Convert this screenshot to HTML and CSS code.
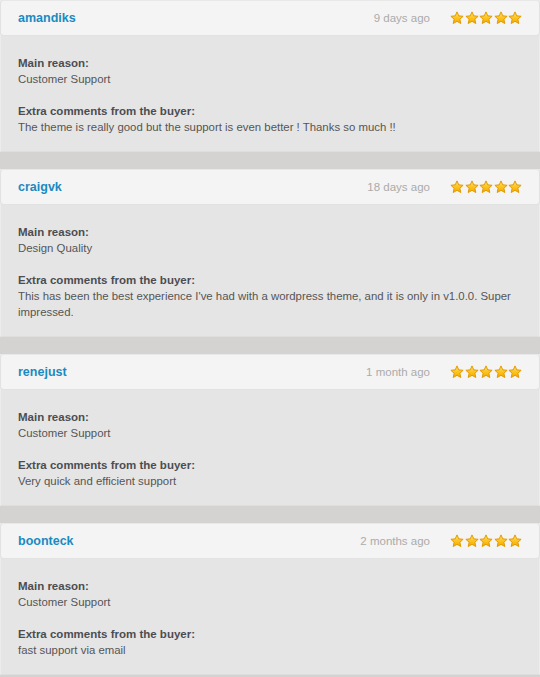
FILE: index.html
```html
<!DOCTYPE html>
<html>
<head>
<meta charset="utf-8">
<link rel="stylesheet" href="styles.css">
</head>
<body>
<svg class="defs" width="0" height="0">
  <defs>
    <linearGradient id="sg" x1="0" y1="0" x2="0" y2="1">
      <stop offset="0" stop-color="#ffe27a"/>
      <stop offset="0.55" stop-color="#fcc21b"/>
      <stop offset="1" stop-color="#f4a800"/>
    </linearGradient>
    <symbol id="star" viewBox="0 0 14 14">
      <path d="M7 0.9 L8.76 4.87 L13.1 5.3 L9.85 8.23 L10.8 12.5 L7 10.3 L3.2 12.5 L4.15 8.23 L0.9 5.3 L5.24 4.87Z" fill="url(#sg)" stroke="#e29a00" stroke-width="1" stroke-linejoin="round"/>
    </symbol>
  </defs>
</svg>
<div class="list">
  <div class="review">
    <div class="head">
      <span class="user">amandiks</span>
      <span class="date">9 days ago</span>
      <span class="stars"><svg><use href="#star"/></svg><svg><use href="#star"/></svg><svg><use href="#star"/></svg><svg><use href="#star"/></svg><svg><use href="#star"/></svg></span>
    </div>
    <div class="body">
      <div class="label">Main reason:</div>
      <div class="text">Customer Support</div>
      <div class="label gap">Extra comments from the buyer:</div>
      <div class="text">The theme is really good but the support is even better ! Thanks so much !!</div>
    </div>
  </div>
  <div class="review">
    <div class="head">
      <span class="user">craigvk</span>
      <span class="date">18 days ago</span>
      <span class="stars"><svg><use href="#star"/></svg><svg><use href="#star"/></svg><svg><use href="#star"/></svg><svg><use href="#star"/></svg><svg><use href="#star"/></svg></span>
    </div>
    <div class="body">
      <div class="label">Main reason:</div>
      <div class="text">Design Quality</div>
      <div class="label gap">Extra comments from the buyer:</div>
      <div class="text">This has been the best experience I've had with a wordpress theme, and it is only in v1.0.0. Super impressed.</div>
    </div>
  </div>
  <div class="review">
    <div class="head">
      <span class="user">renejust</span>
      <span class="date">1 month ago</span>
      <span class="stars"><svg><use href="#star"/></svg><svg><use href="#star"/></svg><svg><use href="#star"/></svg><svg><use href="#star"/></svg><svg><use href="#star"/></svg></span>
    </div>
    <div class="body">
      <div class="label">Main reason:</div>
      <div class="text">Customer Support</div>
      <div class="label gap">Extra comments from the buyer:</div>
      <div class="text">Very quick and efficient support</div>
    </div>
  </div>
  <div class="review">
    <div class="head">
      <span class="user">boonteck</span>
      <span class="date">2 months ago</span>
      <span class="stars"><svg><use href="#star"/></svg><svg><use href="#star"/></svg><svg><use href="#star"/></svg><svg><use href="#star"/></svg><svg><use href="#star"/></svg></span>
    </div>
    <div class="body">
      <div class="label">Main reason:</div>
      <div class="text">Customer Support</div>
      <div class="label gap">Extra comments from the buyer:</div>
      <div class="text">fast support via email</div>
    </div>
  </div>
</div>
</body>
</html>
```
FILE: styles.css
```css
html, body {
  margin: 0;
  padding: 0;
  background: #d4d3d1;
}
body {
  font-family: "Liberation Sans", Arial, sans-serif;
  color: #545454;
}
.defs {
  position: absolute;
  width: 0;
  height: 0;
}
.list {
  display: flex;
  flex-direction: column;
  gap: 17px;
}
.review {
  background: #e5e5e5;
  border-left: 1px solid #ececec;
  border-right: 1px solid #ececec;
  border-bottom: 1px solid #dedede;
}
.head {
  display: flex;
  align-items: center;
  margin: 0 -1px;
  background: #f4f4f4;
  border: 1px solid #e2e2e2;
  border-top-color: #e8e8e8;
  border-radius: 4px;
  padding: 0 17px;
  height: 34px;
}
.user {
  font-size: 12.5px;
  font-weight: bold;
  color: #1a8ac1;
  flex: 1;
}
.date {
  font-size: 11.5px;
  color: #ababab;
  margin-right: 20px;
}
.stars {
  display: flex;
  gap: 0.5px;
}
.stars svg {
  width: 14px;
  height: 14px;
  display: block;
}
.body {
  padding: 19px 17px 16px 17px;
  line-height: 16px;
}
.label {
  font-size: 11.5px;
  font-weight: bold;
  color: #4c4d52;
}
.label.gap {
  margin-top: 16px;
}
.text {
  font-size: 11.4px;
  color: #555;
}
```
